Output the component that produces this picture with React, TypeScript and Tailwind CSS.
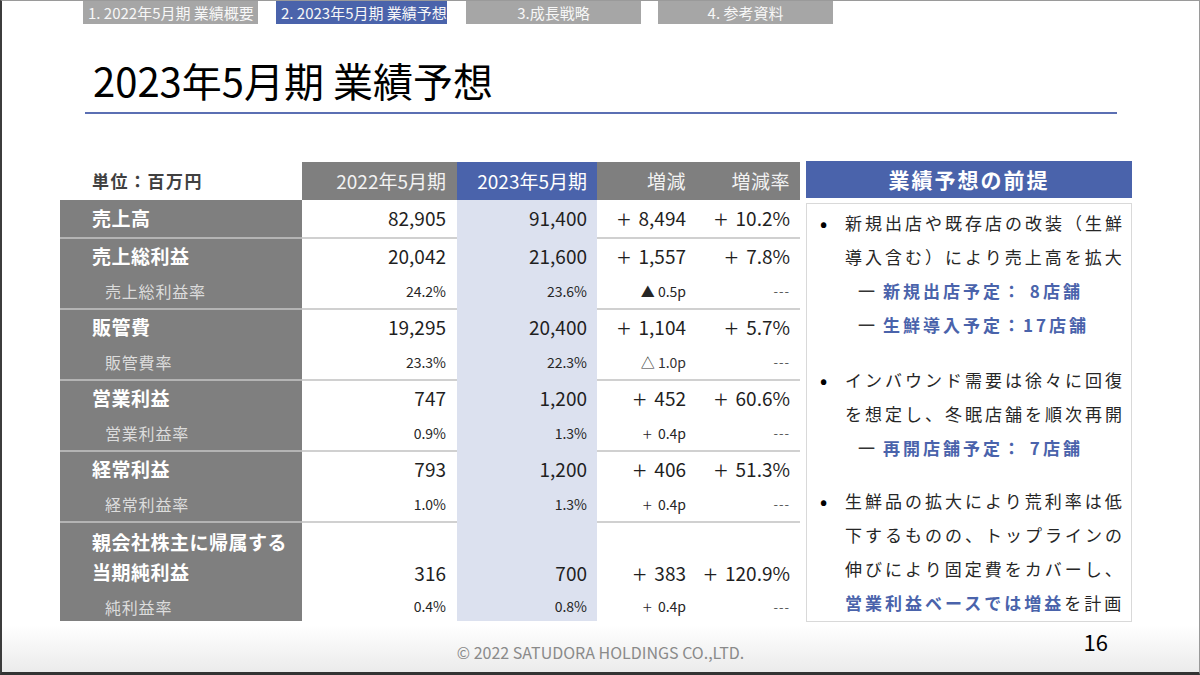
import React from "react";

type Group = {
  label: string[];
  values: string[];
  subLabel?: string;
  sub?: string[];
  last?: boolean;
};

const groups: Group[] = [
  {
    label: ["売上総利益"],
    values: ["20,042", "21,600", "+ 1,557", "+ 7.8%"],
    subLabel: "売上総利益率",
    sub: ["24.2%", "23.6%", "▲ 0.5p", "---"],
  },
  {
    label: ["販管費"],
    values: ["19,295", "20,400", "+ 1,104", "+ 5.7%"],
    subLabel: "販管費率",
    sub: ["23.3%", "22.3%", "△ 1.0p", "---"],
  },
  {
    label: ["営業利益"],
    values: ["747", "1,200", "+ 452", "+ 60.6%"],
    subLabel: "営業利益率",
    sub: ["0.9%", "1.3%", "+ 0.4p", "---"],
  },
  {
    label: ["経常利益"],
    values: ["793", "1,200", "+ 406", "+ 51.3%"],
    subLabel: "経常利益率",
    sub: ["1.0%", "1.3%", "+ 0.4p", "---"],
  },
  {
    label: ["親会社株主に帰属する", "当期純利益"],
    values: ["316", "700", "+ 383", "+ 120.9%"],
    subLabel: "純利益率",
    sub: ["0.4%", "0.8%", "+ 0.4p", "---"],
    last: true,
  },
];

// value columns: width, padding, background, separator colour
const cols = [
  { w: "w-[155px]", pr: "pr-[11px]", bg: "bg-white", line: "border-[#d0d0d0]" },
  { w: "w-[140px]", pr: "pr-[10px]", bg: "bg-[#dce1ef]", line: "border-[#dce1ef]" },
  { w: "w-[101px]", pr: "pr-[12px]", bg: "bg-white", line: "border-[#d0d0d0]" },
  { w: "w-[102px]", pr: "pr-[10px]", bg: "bg-white", line: "border-[#d0d0d0]" },
];

const subClass = (v: string) =>
  v === "---"
    ? "text-[#595959] text-[13px] tracking-[1px]"
    : v.startsWith("△")
    ? "text-[#333] text-[14px]"
    : "text-[#262626] text-[14px]";

// "+ 8,494" -> larger plus sign with a gap, as in the slide
const Num = ({ v, plus }: { v: string; plus: string }) =>
  v.startsWith("+ ") ? (
    <>
      <span className={plus}>+</span>
      {v.slice(2)}
    </>
  ) : (
    <>{v}</>
  );

const MAIN_PLUS = "text-[25px] leading-none font-light mr-[8px]";
const SUB_PLUS = "text-[17px] leading-none font-light mr-[6px]";

const GroupRow = ({ g }: { g: Group }) => {
  const mainH = g.last ? "h-[69px]" : "h-[35px]";
  const subH = g.last ? "h-[29px]" : "h-[34px]";
  return (
    <div className="flex">
      <div className="w-[242px] bg-[#7f7f7f] border-t-2 border-[#b4b4b4] flex flex-col">
        {g.last ? (
          <div
            className={`${mainH} pl-[32px] pt-[4px] text-white font-bold text-[19px] leading-[30px] tracking-[0.5px]`}
          >
            {g.label.map((l) => (
              <div key={l}>{l}</div>
            ))}
          </div>
        ) : (
          <div
            className={`${mainH} pl-[32px] flex items-center text-white font-bold text-[19px] tracking-[0.5px]`}
          >
            {g.label[0]}
          </div>
        )}
        <div
          className={`${subH} pl-[45px] flex items-center text-[#dcdcdc] text-[16px] tracking-[0.8px]`}
        >
          {g.subLabel}
        </div>
      </div>
      {cols.map((c, i) => (
        <div key={i} className={`${c.w} ${c.bg} border-t-2 ${c.line} flex flex-col`}>
          <div className={`${mainH} ${c.pr} flex flex-col justify-end`}>
            <div
              className={`${g.last ? "h-[38px]" : "h-[35px]"} flex items-center justify-end text-[19px] text-[#1f1f1f]`}
            >
              <Num v={g.values[i]} plus={MAIN_PLUS} />
            </div>
          </div>
          <div className={`${subH} ${c.pr} flex items-center justify-end ${subClass(g.sub![i])}`}>
            <Num v={g.sub![i]} plus={SUB_PLUS} />
          </div>
        </div>
      ))}
    </div>
  );
};

const Table = () => (
  <div className="w-[740px] flex flex-col">
    <div className="flex h-[38px]">
      <div className="w-[242px] bg-white pl-[32px] flex items-center font-bold text-[17px] text-[#404040] tracking-[1.5px]">
        単位：百万円
      </div>
      <div className="w-[155px] bg-[#7f7f7f] pr-[11px] flex items-center justify-end text-[#f2f2f2] text-[19px]">
        2022年5月期
      </div>
      <div className="w-[140px] bg-[#4a63ab] pr-[10px] flex items-center justify-end text-white text-[19px]">
        2023年5月期
      </div>
      <div className="w-[101px] bg-[#7f7f7f] pr-[12px] flex items-center justify-end text-[#f2f2f2] text-[19px] tracking-[0.5px]">
        増減
      </div>
      <div className="w-[102px] bg-[#7f7f7f] pr-[10px] flex items-center justify-end text-[#f2f2f2] text-[19px] tracking-[0.5px]">
        増減率
      </div>
    </div>
    <div className="flex h-[37px]">
      <div className="w-[242px] bg-[#7f7f7f] pl-[32px] flex items-center text-white font-bold text-[19px] tracking-[0.5px]">
        売上高
      </div>
      {["82,905", "91,400", "+ 8,494", "+ 10.2%"].map((v, i) => (
        <div
          key={v}
          className={`${cols[i].w} ${cols[i].bg} ${cols[i].pr} flex items-center justify-end text-[19px] text-[#1f1f1f]`}
        >
          <Num v={v} plus={MAIN_PLUS} />
        </div>
      ))}
    </div>
    {groups.map((g) => (
      <GroupRow key={g.label[0]} g={g} />
    ))}
  </div>
);

const Bullet = ({ children }: { children: React.ReactNode }) => (
  <div className="flex">
    <div className="w-[25px] text-[19px] font-bold text-black">•</div>
    <div>{children}</div>
  </div>
);

const Sub = ({ children }: { children: React.ReactNode }) => (
  <div className="flex pl-[38px]">
    <span className="w-[25px] text-[#333] tracking-normal">一</span>
    <span className="font-bold text-[#4a63ab]">{children}</span>
  </div>
);

const Premise = () => (
  <div className="w-[326px] flex flex-col">
    <div className="h-[37px] bg-[#4a63ab] flex items-center justify-center text-white font-bold text-[21px] tracking-[2px]">
      業績予想の前提
    </div>
    <div className="mt-[5px] h-[419px] border border-[#d9d9d9] pl-[13px] pt-[2px] text-[17px] leading-[34px] tracking-[3px] text-[#262626] whitespace-nowrap">
      <Bullet>
        <div>新規出店や既存店の改装（生鮮</div>
        <div>導入含む）により売上高を拡大</div>
      </Bullet>
      <Sub>新規出店予定： 8店舗</Sub>
      <Sub>生鮮導入予定：17店舗</Sub>
      <div className="mt-[21px]">
        <Bullet>
          <div>インバウンド需要は徐々に回復</div>
          <div>を想定し、冬眠店舗を順次再開</div>
        </Bullet>
        <Sub>再開店舗予定： 7店舗</Sub>
      </div>
      <div className="mt-[19px]">
        <Bullet>
          <div>生鮮品の拡大により荒利率は低</div>
          <div>下するものの、トップラインの</div>
          <div>伸びにより固定費をカバーし、</div>
          <div>
            <span className="font-bold text-[#4a63ab]">営業利益ベースでは増益</span>を計画
          </div>
        </Bullet>
      </div>
    </div>
  </div>
);

const tabs = [
  { text: "1. 2022年5月期 業績概要", w: "w-[175px]", ml: "ml-[81px]", bg: "bg-[#a6a6a6]", align: "justify-start pl-[5px]" },
  { text: "2. 2023年5月期 業績予想", w: "w-[171px]", ml: "ml-[18px]", bg: "bg-[#4a63ab]", align: "justify-start pl-[5px]" },
  { text: "3.成長戦略", w: "w-[175px]", ml: "ml-[19px]", bg: "bg-[#a6a6a6]", align: "justify-center" },
  { text: "4. 参考資料", w: "w-[175px]", ml: "ml-[17px]", bg: "bg-[#a6a6a6]", align: "justify-center" },
];

export default function App() {
  return (
    <div className="w-[1200px] h-[675px] flex flex-col border-t border-r border-t-[#9a9a9a] border-r-[#9a9a9a] border-l-2 border-l-[#3c3c3c] border-b-[3px] border-b-[#333] bg-[linear-gradient(to_bottom,#ffffff_0%,#ffffff_93%,#ebebeb_100%)] font-['Noto_Sans_CJK_JP','Noto_Sans',sans-serif] overflow-hidden">
      {/* tabs */}
      <div className="flex h-[23px]">
        {tabs.map((t) => (
          <div
            key={t.text}
            className={`${t.w} ${t.ml} ${t.bg} ${t.align} flex items-center text-[15px] text-[#f7f7f7] leading-none`}
          >
            {t.text}
          </div>
        ))}
      </div>

      {/* title */}
      <div className="h-[88px] pt-[24px] pl-[91px] flex items-center text-[40px] text-black">
        2023年5月期 業績予想
      </div>
      <div className="ml-[83px] w-[1032px] h-[2px] bg-[#5b6fb3]" />

      {/* content */}
      <div className="mt-[47px] flex items-start">
        <div className="ml-[58px] mt-[1px]">
          <Table />
        </div>
        <div className="ml-[6px]">
          <Premise />
        </div>
      </div>

      {/* footer */}
      <div className="grid grid-cols-3 h-[50px] mt-auto">
        <div />
        <div className="flex items-end justify-center pb-[8px] text-[16px] text-[#8a8a8a] whitespace-nowrap">
          © 2022 SATUDORA HOLDINGS CO.,LTD.
        </div>
        <div className="flex justify-end pr-[91px] pt-[5px] text-[22px] text-black leading-[28px]">
          16
        </div>
      </div>
    </div>
  );
}
